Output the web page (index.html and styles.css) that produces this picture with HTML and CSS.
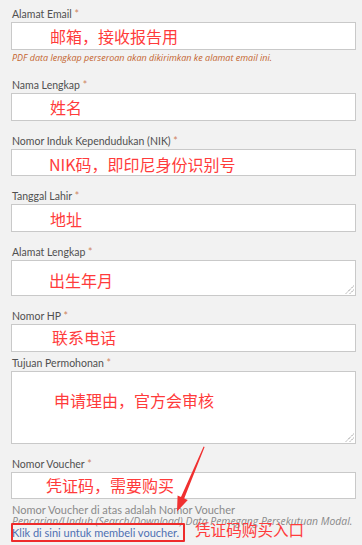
FILE: index.html
```html
<!DOCTYPE html>
<html lang="id">
<head>
<meta charset="utf-8">
<title>Form</title>
<link rel="stylesheet" href="styles.css">
</head>
<body>
<div class="page">
  <form class="form">
    <div class="field">
      <div class="label">Alamat Email <span class="req">*</span></div>
      <div class="box"><span class="note">邮箱，接收报告用</span></div>
      <div class="hint">PDF data lengkap perseroan akan dikirimkan ke alamat email ini.</div>
    </div>
    <div class="field">
      <div class="label">Nama Lengkap <span class="req">*</span></div>
      <div class="box"><span class="note">姓名</span></div>
    </div>
    <div class="field">
      <div class="label">Nomor Induk Kependudukan (NIK) <span class="req">*</span></div>
      <div class="box box-low"><span class="note note-nik">NIK码，即印尼身份识别号</span></div>
    </div>
    <div class="field">
      <div class="label">Tanggal Lahir <span class="req">*</span></div>
      <div class="box box-low"><span class="note">地址</span></div>
    </div>
    <div class="field">
      <div class="label">Alamat Lengkap <span class="req">*</span></div>
      <div class="box area-short"><span class="note note-addr">出生年月</span>
        <svg class="grip" width="9" height="9" viewBox="0 0 9 9"><path d="M8.5 1 L1 8.5 M8.5 5 L5 8.5" stroke="#6a6a6a" stroke-width="1" stroke-dasharray="1 1" fill="none"/></svg>
      </div>
    </div>
    <div class="field field-tight">
      <div class="label">Nomor HP <span class="req">*</span></div>
      <div class="box box-high"><span class="note note-hp">联系电话</span></div>
    </div>
    <div class="field">
      <div class="label">Tujuan Permohonan <span class="req">*</span></div>
      <div class="box area-tall"><span class="note note-tujuan">申请理由，官方会审核</span>
        <svg class="grip" width="9" height="9" viewBox="0 0 9 9"><path d="M8.5 1 L1 8.5 M8.5 5 L5 8.5" stroke="#6a6a6a" stroke-width="1" stroke-dasharray="1 1" fill="none"/></svg>
      </div>
    </div>
    <div class="field">
      <div class="label">Nomor Voucher <span class="req">*</span></div>
      <div class="box"><span class="note note-voucher">凭证码，需要购买</span></div>
      <div class="help">
        <div class="help-1">Nomor Voucher di atas adalah Nomor Voucher</div>
        <div class="help-2">Pencarian/Unduh (Search/Download) Data Pemegang Persekutuan Modal.</div>
        <div class="help-3"><a class="link" href="#">Klik di sini untuk membeli voucher.</a></div>
      </div>
    </div>
  </form>

  <div class="annot-box"></div>
  <div class="annot-text">凭证码购买入口</div>
  <svg class="annot-arrow" width="362" height="545" viewBox="0 0 362 545">
    <polygon points="204.6,447 184.2,498.4 187.8,500 177,511.5 177.6,495.4 181,497 203.6,446.6" fill="#f03030"/>
  </svg>
</div>
</body>
</html>
```

FILE: styles.css
```css
html, body {
  margin: 0;
  padding: 0;
  background: #f2f2f2;
}
.page {
  position: relative;
  width: 362px;
  height: 545px;
  overflow: hidden;
  font-family: Lato, "Open Sans", sans-serif;
}
.form {
  display: flex;
  flex-direction: column;
  gap: 12px;
  padding: 6px 0 0 11px;
  margin: 0;
}
.field {
  display: flex;
  flex-direction: column;
  width: 345px;
}
.field-tight {
  margin-bottom: -9px;
}
.label {
  font-size: 10.5px;
  line-height: 16px;
  height: 16px;
  color: #505050;
  padding-left: 1px;
  white-space: nowrap;
}
.req {
  color: #d0845f;
}
.box {
  position: relative;
  box-sizing: border-box;
  height: 27.5px;
  background: #fff;
  border: 1px solid #c9c9c9;
  display: flex;
  align-items: center;
  padding-left: 38px;
}
.box-low { padding-top: 3px; }
.box-high { padding-bottom: 2px; }
.area-short {
  height: 36.5px;
  padding-top: 4px;
}
.area-tall {
  height: 73px;
  align-items: flex-start;
  padding-top: 18px;
  padding-left: 42px;
}
.note {
  font-family: "Noto Sans CJK SC", sans-serif;
  font-size: 16px;
  line-height: 20px;
  color: #ff3b3b;
  white-space: nowrap;
}
.note-nik { margin-left: -1px; }
.note-addr { margin-left: -1px; }
.note-hp { margin-left: 2px; }
.note-voucher { margin-left: -4px; }
.grip {
  position: absolute;
  right: 1px;
  bottom: 1px;
}
.hint {
  font-family: "Open Sans", sans-serif;
  font-size: 9px;
  line-height: 15px;
  height: 15px;
  font-style: italic;
  color: #c4642e;
  padding-left: 1px;
  margin-bottom: 0.5px;
  white-space: nowrap;
}
.help {
  padding-top: 5px;
  padding-left: 1px;
  font-size: 11px;
  color: #8a8a8a;
  white-space: nowrap;
}
.help-1 { line-height: 12px; }
.help-2 { line-height: 10px; font-style: italic; font-family: "Open Sans", sans-serif; font-size: 10.4px; }
.help-3 { line-height: 14px; }
.link {
  color: #4f70b2;
  text-decoration: none;
}
.annot-box {
  position: absolute;
  left: 11px;
  top: 523px;
  width: 170px;
  height: 15px;
  border: 2px solid #ee2b2b;
  border-radius: 1px;
}
.annot-text {
  position: absolute;
  left: 195px;
  top: 519px;
  font-family: "Noto Sans CJK SC", sans-serif;
  font-size: 15.6px;
  line-height: 20px;
  color: #ff3b3b;
  white-space: nowrap;
}
.annot-arrow {
  position: absolute;
  left: 0;
  top: 0;
  pointer-events: none;
}
```
